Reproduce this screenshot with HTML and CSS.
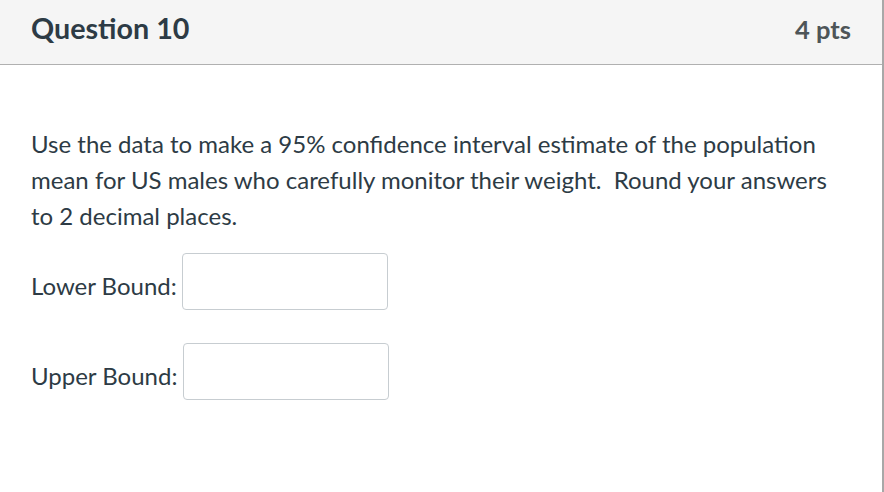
FILE: index.html
```html
<!DOCTYPE html>
<html>
<head>
<meta charset="utf-8">
<link rel="stylesheet" href="styles.css">
</head>
<body>
<div class="question">
  <div class="header">
    <h2 class="title">Question 10</h2>
    <div class="pts">4 pts</div>
  </div>
  <div class="content">
    <p class="text">Use the data to make a 95% confidence interval estimate of the population mean for US males who carefully monitor their weight.&nbsp; Round your answers to 2 decimal places.</p>
    <div class="row"><span class="label">Lower Bound:</span><input class="box" type="text"></div>
    <div class="row row2"><span class="label">Upper Bound:</span><input class="box box2" type="text"></div>
  </div>
</div>
</body>
</html>
```
FILE: styles.css
```css
html, body {
  margin: 0;
  padding: 0;
  background: #fff;
}
body {
  font-family: Lato, "Open Sans", sans-serif;
  color: #2d3b45;
  width: 884px;
  height: 492px;
  overflow: hidden;
}
.question {
  width: 882px;
  height: 492px;
  border-right: 2px solid #a8a8a8;
}
.header {
  height: 65px;
  box-sizing: border-box;
  background: #f5f5f5;
  border-bottom: 1px solid #b0b0b0;
  display: flex;
  align-items: baseline;
  justify-content: space-between;
  padding: 11px 31px 0 31px;
}
.title {
  margin: 0;
  font-size: 28.7px;
  font-weight: 700;
  line-height: normal;
  color: #2d3b45;
}
.pts {
  font-size: 25.5px;
  font-weight: 700;
  color: #4e5558;
}
.content {
  padding: 0 31px;
}
.text {
  margin: 0;
  padding-top: 61px;
  font-size: 24px;
  line-height: 36px;
  width: 810px;
}
.row {
  display: flex;
  align-items: flex-start;
  font-size: 24px;
  margin-top: 19px;
}
.row2 {
  margin-top: 33px;
}
.label {
  margin-top: 18px;
  margin-right: 5px;
  line-height: normal;
}
.box {
  width: 206px;
  height: 57px;
  box-sizing: border-box;
  border: 1px solid #c7cdd1;
  border-radius: 4px;
  background: #fff;
  margin: 0;
  padding: 0;
}
.box2 {
  margin-left: 1px;
}
```
